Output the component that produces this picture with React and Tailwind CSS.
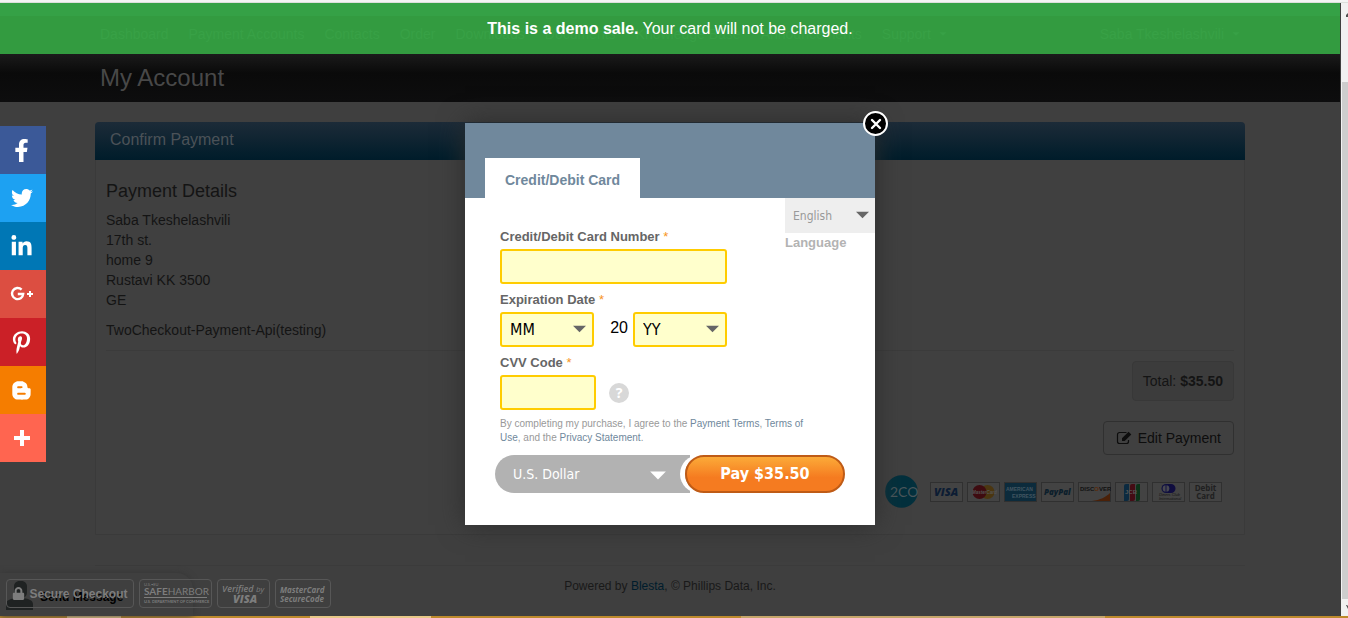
import React from "react";
import {
  FaFacebookF,
  FaTwitter,
  FaLinkedinIn,
  FaPinterestP,
  FaBloggerB,
  FaLock,
} from "react-icons/fa";

const navItems = [
  "Dashboard",
  "Payment Accounts",
  "Contacts",
  "Order",
  "Downloads",
  "Documents",
  "Knowledge Base",
  "Announcements",
];

const GooglePlus = () => (
  <svg viewBox="0 0 24 16" className="w-6 h-4" fill="none" stroke="white">
    <path d="M11.6 3.6A5.6 5.6 0 1 0 13.2 8H7.8" strokeWidth="2.4" />
    <path d="M20 5v6M17 8h6" strokeWidth="2" />
  </svg>
);

const Plus = () => (
  <svg viewBox="0 0 16 16" className="w-4 h-4" fill="white">
    <path d="M6 0h4v6h6v4h-6v6H6v-6H0V6h6z" />
  </svg>
);

const PencilSquare = () => (
  <svg viewBox="0 0 16 14" className="w-4 h-[14px]" fill="none" stroke="currentColor">
    <path d="M10.5 1.5h-7a2 2 0 0 0-2 2v7a2 2 0 0 0 2 2h7a2 2 0 0 0 2-2V9" strokeWidth="1.2" />
    <path d="M6 10V7.300L12.600 0.700L15.300 3.400L8.700 10z" fill="currentColor" stroke="none" />
  </svg>
);

const Caret = ({ className }) => (
  <svg viewBox="0 0 14 8" className={className} fill="currentColor">
    <path d="M0 0.5h14L7 7.5z" />
  </svg>
);

const shareLinks = [
  { name: "Facebook", color: "bg-[#3b5998]", icon: <FaFacebookF size={23} /> },
  { name: "Twitter", color: "bg-[#1da1f2]", icon: <FaTwitter size={22} /> },
  { name: "LinkedIn", color: "bg-[#0077b5]", icon: <FaLinkedinIn size={23} /> },
  { name: "Google+", color: "bg-[#dc4e41]", icon: <GooglePlus /> },
  { name: "Pinterest", color: "bg-[#cb2027]", icon: <FaPinterestP size={23} /> },
  { name: "Blogger", color: "bg-[#f57d00]", icon: <FaBloggerB size={21} /> },
  { name: "More", color: "bg-[#ff6550]", icon: <Plus /> },
];

const TopNav = () => (
  <nav className="relative h-[51px] bg-[#339b40] border-t-[13px] border-[#35a146]">
    <div className="max-w-[1150px] mx-auto px-[5px] flex justify-between pt-2 text-sm text-[#38a146]">
      <div className="flex gap-5">
        {navItems.map((item) => (
          <a key={item} href="#">
            {item}
          </a>
        ))}
        <a href="#" className="flex items-center gap-2">
          Support <Caret className="w-2 h-1" />
        </a>
      </div>
      <a href="#" className="flex items-center gap-2">
        Saba Tkeshelashvili <Caret className="w-2 h-1" />
      </a>
    </div>
    {/* Demo notice over the nav */}
    <p className="absolute inset-x-0 bottom-0 h-[51px] flex items-center justify-center gap-1 text-white">
      <strong>This is a demo sale.</strong> Your card will not be charged.
    </p>
  </nav>
);

const CardBadge = ({ label, children }) => (
  <svg viewBox="0 0 33 20" className="w-[33px] h-5" role="img" aria-label={label}>
    <rect x="0.5" y="0.5" width="32" height="19" fill="#434343" stroke="#303030" />
    {children}
  </svg>
);

const PaymentLogos = () => (
  <div className="flex items-center gap-1">
    <svg viewBox="0 0 33 33" className="w-[33px] h-[33px] mr-2" role="img" aria-label="2CO">
      <circle cx="16.5" cy="16.5" r="16.3" fill="#03303d" />
      <text x="5" y="22" fontSize="14" fill="#4a565b" fontFamily="Lato, sans-serif">
        2CO
      </text>
    </svg>
    <CardBadge label="Visa">
      <text x="4" y="14" fontSize="11" fontWeight="900" fontStyle="italic" fill="#0c1c33" fontFamily="Open Sans, sans-serif">
        VISA
      </text>
    </CardBadge>
    <CardBadge label="MasterCard">
      <circle cx="20.5" cy="10" r="7" fill="#4b3610" />
      <circle cx="12.5" cy="10" r="7" fill="#3e0b10" />
      <text x="5" y="12" fontSize="4.5" fontWeight="bold" fontStyle="italic" fill="#555" fontFamily="Liberation Sans, sans-serif">
        MasterCard
      </text>
    </CardBadge>
    <CardBadge label="American Express">
      <rect x="1" y="1" width="31" height="18" fill="#0c2b3c" />
      <text x="2" y="9" fontSize="5" fontWeight="bold" fill="#435661" fontFamily="Liberation Sans, sans-serif">
        AMERICAN
      </text>
      <text x="8" y="16" fontSize="5" fontWeight="bold" fill="#435661" fontFamily="Liberation Sans, sans-serif">
        EXPRESS
      </text>
    </CardBadge>
    <CardBadge label="PayPal">
      <text x="3" y="13" fontSize="8" fontWeight="900" fontStyle="italic" fill="#0c1e2b" fontFamily="Open Sans, sans-serif">
        PayPal
      </text>
    </CardBadge>
    <CardBadge label="Discover">
      <path d="M32 11v8H14c8-1 14-4 18-8z" fill="#4b2108" />
      <text x="2" y="9" fontSize="6" fontWeight="bold" fill="#111" fontFamily="Liberation Sans, sans-serif">
        DISC
        <tspan fill="#5a2a0b">O</tspan>
        VER
      </text>
    </CardBadge>
    <CardBadge label="JCB">
      <path d="M11 2h3v15a2 2 0 0 1-2 2H9V4a2 2 0 0 1 2-2z" fill="#0b2a40" />
      <path d="M17 2h3v15a2 2 0 0 1-2 2h-3V4a2 2 0 0 1 2-2z" fill="#450c14" />
      <path d="M23 2h2v15a2 2 0 0 1-2 2h-2V4a2 2 0 0 1 2-2z" fill="#0b3318" />
      <text x="10" y="12" fontSize="6" fontWeight="bold" fill="#555" fontFamily="Liberation Sans, sans-serif">
        JCB
      </text>
    </CardBadge>
    <CardBadge label="Diners Club">
      <path d="M14 2h5a4.5 4.500 0 0 1 0 9h-5z" fill="#100d3f" />
      <circle cx="14" cy="6.5" r="4.5" fill="#101040" />
      <circle cx="14" cy="6.5" r="3.3" fill="#484850" />
      <path d="M14 3v7" stroke="#101040" />
      <text x="7" y="14" fontSize="4" fontStyle="italic" fill="#151515" fontFamily="Liberation Sans, sans-serif">
        Diners Club
      </text>
      <text x="7" y="18" fontSize="4" fontStyle="italic" fill="#151515" fontFamily="Liberation Sans, sans-serif">
        International
      </text>
    </CardBadge>
    <CardBadge label="Debit Card">
      <text x="16.5" y="9" fontSize="8" textAnchor="middle" fontWeight="bold" fill="#202020" fontFamily="Open Sans, sans-serif">
        Debit
      </text>
      <text x="16.5" y="17" fontSize="8" textAnchor="middle" fontWeight="bold" fill="#202020" fontFamily="Open Sans, sans-serif">
        Card
      </text>
    </CardBadge>
  </div>
);

const ConfirmPayment = () => (
  <section className="rounded-t border border-[#3a3a3a] bg-[#404040]">
    <h2 className="h-[38px] -mx-px -mt-px rounded-t px-[15px] text-base leading-9 text-[#4b5258] bg-gradient-to-b from-[#1c2b38] to-[#001c2a]">
      Confirm Payment
    </h2>
    <div className="px-[10px] pt-[21px] pb-[26px]">
      <h3 className="text-lg leading-5 text-[#141414]">Payment Details</h3>
      <address className="pt-[9px] not-italic text-sm text-[#141414]">
        Saba Tkeshelashvili
        <br />
        17th st.
        <br />
        home 9
        <br />
        Rustavi KK 3500
        <br />
        GE
      </address>
      <p className="pt-[10px] text-sm text-[#141414]">TwoCheckout-Payment-Api(testing)</p>
      <hr className="mt-[10px] border-[#3b3b3b]" />
      <div className="flex flex-col items-end">
        <p className="mt-[10px] h-10 px-[10px] flex items-center gap-1 rounded border border-[#383838] bg-[#3c3c3c] text-sm text-[#141414]">
          Total: <strong>$35.50</strong>
        </p>
        <button className="my-5 h-[34px] px-3 flex items-center gap-[6px] rounded border border-[#303030] text-sm text-[#0d0d0d]">
          <PencilSquare /> Edit Payment
        </button>
        <div className="mr-3">
          <PaymentLogos />
        </div>
      </div>
    </div>
  </section>
);

const ShareBar = () => (
  <div className="absolute left-0 top-[123px] w-[46px]">
    {shareLinks.map((link) => (
      <a
        key={link.name}
        href="#"
        aria-label={link.name}
        className={`h-12 pr-[3px] flex items-center justify-center text-white ${link.color}`}
      >
        {link.icon}
      </a>
    ))}
  </div>
);

const TrustSeals = () => (
  <div className="absolute left-0 bottom-0 pl-[6px] pb-2 pt-[6px] w-[193px] rounded-tr-2xl shadow-[0_0_6px_#363636]">
    {/* Chat tab behind the seals */}
    <div className="absolute left-[6px] top-2 text-[#1f2222]">
      <svg viewBox="0 0 27 29" className="w-[27px] h-[29px]" fill="currentColor">
        <path d="M8 5c0-7 13-7 13 0v6c0 9-13 9-13 0zM0 29v-6c0-4 5-5 9-6h9c4 1 9 2 9 6v6z" />
      </svg>
    </div>
    <span className="absolute left-10 top-4 text-xs leading-4 font-bold text-black">Send Message</span>
    <div className="relative flex w-max gap-[5px] text-[#7d7d7d]">
      <div className="h-[29px] w-32 flex items-center justify-center gap-1 rounded-sm border border-[#575757] text-xs font-bold">
        <FaLock size={13} /> Secure Checkout
      </div>
      <div className="h-[29px] w-[73px] rounded-sm border border-[#575757]">
        <svg viewBox="0 0 71 27" className="w-full h-full" fill="currentColor" fontFamily="Lato, sans-serif">
          <text x="4" y="6" fontSize="4">
            U.S.•EU
          </text>
          <text x="4" y="15" fontSize="10">
            <tspan fontWeight="bold">SAFE</tspan>HARBOR
          </text>
          <path d="M4 17h63v1H4z" />
          <text x="4" y="23" fontSize="4" fontWeight="bold">
            U.S. DEPARTMENT OF COMMERCE
          </text>
        </svg>
      </div>
      <div className="h-[29px] w-[53px] rounded-sm border border-[#575757]">
        <svg viewBox="0 0 51 27" className="w-full h-full" fill="currentColor" fontFamily="Open Sans, sans-serif" fontStyle="italic">
          <text x="4" y="12" fontSize="9" fontWeight="600">
            Verified{" "}
            <tspan fontSize="8" fontWeight="400">
              by
            </tspan>
          </text>
          <text x="15" y="23" fontSize="11" fontWeight="800">
            VISA
          </text>
        </svg>
      </div>
      <div className="h-[29px] w-14 rounded-sm border border-[#575757]">
        <svg
          viewBox="0 0 54 27"
          className="w-full h-full"
          fill="currentColor"
          fontFamily="Open Sans, sans-serif"
          fontStyle="italic"
          fontWeight="700"
        >
          <text x="4" y="13" fontSize="8">
            MasterCard
          </text>
          <text x="4" y="22" fontSize="8">
            SecureCode
          </text>
        </svg>
      </div>
    </div>
  </div>
);

const Label = ({ htmlFor, children }) => (
  <label htmlFor={htmlFor} className="block text-[13px] leading-5 font-bold text-[#666]">
    {children} <span className="font-normal text-[#f7941d]">*</span>
  </label>
);

const YellowSelect = ({ id, label, value }) => (
  <div className="relative">
    <select
      id={id}
      aria-label={label}
      className="block appearance-none w-[94px] h-[35px] px-2 rounded-[3px] border-2 border-[#fc0] bg-[#ffc] font-['DejaVu_Sans_Condensed','Noto_Sans',sans-serif] text-base text-black"
    >
      <option>{value}</option>
    </select>
    <Caret className="absolute right-2 top-[13px] w-[13px] h-2 text-[#666] pointer-events-none" />
  </div>
);

const PaymentDialog = () => (
  <div role="dialog" aria-label="Payment" className="relative w-[410px] bg-white shadow-[0_0_25px_#2c2c2c]">
    <button
      aria-label="Close"
      className="absolute -right-[13px] -top-3 w-[25px] h-[25px] rounded-full border-2 border-white bg-black flex items-center justify-center"
    >
      <svg viewBox="0 0 12 12" className="w-3 h-3" stroke="white" strokeWidth="2.4" strokeLinecap="round">
        <path d="M2 2l8 8M10 2l-8 8" />
      </svg>
    </button>
    <div className="h-[75px] px-5 flex items-end bg-[#70889c]">
      <button className="h-10 px-5 pt-1 bg-white text-sm font-bold text-[#70889c]">
        Credit/Debit Card
      </button>
    </div>
    {/* Language picker */}
    <div className="absolute right-0 top-[75px] w-[90px]">
      <div className="relative">
        <select
          id="language"
          className="block appearance-none w-full h-[35px] px-2 bg-[#eee] font-['DejaVu_Sans_Condensed','Noto_Sans',sans-serif] text-xs text-[#999]"
        >
          <option>English</option>
        </select>
        <Caret className="absolute right-[6px] top-[13px] w-[13px] h-2 text-[#666] pointer-events-none" />
      </div>
      <label htmlFor="language" className="block text-[13px] leading-5 font-bold text-[#b3b3b3]">
        Language
      </label>
    </div>
    <form className="px-[30px] pt-[29px] pb-8">
      <div className="px-[5px]">
        <Label htmlFor="card-number">Credit/Debit Card Number</Label>
        <input
          id="card-number"
          className="block mt-0.5 mb-[6px] w-[227px] h-[35px] px-2 rounded-[3px] border-2 border-[#fc0] bg-[#ffc]"
        />
        <Label htmlFor="month">Expiration Date</Label>
        <div className="mt-0.5 mb-[6px] w-[227px] flex justify-between">
          <YellowSelect id="month" label="Month" value="MM" />
          <div className="flex gap-[5px]">
            <span className="leading-8 text-base text-black">20</span>
            <YellowSelect id="year" label="Year" value="YY" />
          </div>
        </div>
        <Label htmlFor="cvv">CVV Code</Label>
        <div className="mt-0.5 flex items-center gap-[13px]">
          <input
            id="cvv"
            className="block w-24 h-[35px] px-2 rounded-[3px] border-2 border-[#fc0] bg-[#ffc]"
          />
          <button
            type="button"
            className="w-5 h-5 rounded-full bg-[#d8d8d8] font-['Noto_Sans',sans-serif] text-sm leading-5 font-bold text-white"
          >
            ?
          </button>
        </div>
        <p className="mt-[7px] text-[10px] leading-[14px] text-[#999]">
          By completing my purchase, I agree to the{" "}
          <a href="#" className="text-[#70889c]">
            Payment Terms
          </a>
          ,{" "}
          <a href="#" className="text-[#70889c]">
            Terms of
            <br />
            Use
          </a>
          , and the{" "}
          <a href="#" className="text-[#70889c]">
            Privacy Statement
          </a>
          .
        </p>
      </div>
      <div className="mt-[10px] flex">
        <div className="relative flex-1">
          <select
            aria-label="Currency"
            className="block appearance-none w-full h-[38px] pl-[18px] rounded-l-full bg-[#b2b2b2] font-['DejaVu_Sans_Condensed','Noto_Sans',sans-serif] text-sm text-white"
          >
            <option>U.S. Dollar</option>
          </select>
          <Caret className="absolute right-6 top-4 w-4 h-[9px] text-white pointer-events-none" />
        </div>
        <button
          type="button"
          className="relative -ml-[5px] w-40 h-[38px] rounded-full border-2 border-[#bf5b16] bg-gradient-to-b from-[#fbaa38] to-[#f57b20] to-60% shadow-[-5px_0_0_white] font-['DejaVu_Sans_Condensed','Noto_Sans',sans-serif] text-base font-bold text-white"
        >
          Pay $35.50
        </button>
      </div>
    </form>
  </div>
);

const Scrollbar = () => (
  <div className="w-2 border-l border-[#3f3f3f] bg-[#f1f1f1] text-[#505050]">
    <div className="h-full pl-px flex flex-col">
      <svg viewBox="0 0 6 79" className="h-[79px]" fill="currentColor">
        <path d="M4 12l2-2v4h-2z" />
      </svg>
      <div className="flex-1 bg-[#cdcdcd]" />
      <svg viewBox="0 0 6 17" className="h-[17px]" fill="currentColor">
        <path d="M4 6h1l1 1v3z" />
      </svg>
    </div>
  </div>
);

const App = () => {
  return (
    <div className="min-h-screen flex flex-col bg-[#3f3f3f] font-['Liberation_Sans',Arial,sans-serif]">
      <div className="h-[3px] bg-[#f4f4f4] border-b border-[#dcdfdc]" />
      <div className="flex-1 flex">
        <div className="relative flex-1">
          <TopNav />
          <header className="h-12 bg-gradient-to-b from-[#1b1b1b] via-[#0a0a0a] via-40% to-[#0d0d0e]">
            <h1 className="max-w-[1150px] mx-auto px-[5px] text-2xl leading-[48px] text-[#484848]">
              My Account
            </h1>
          </header>
          <main className="max-w-[1150px] mx-auto pt-5">
            <ConfirmPayment />
            <footer className="mt-[30px] pt-1 border-t border-[#3b3b3b] text-center text-xs leading-8 text-[#191919]">
              Powered by{" "}
              <a href="#" className="text-[#001c2c]">
                Blesta
              </a>
              , © Phillips Data, Inc.
            </footer>
          </main>
          <TrustSeals />
          <ShareBar />
          {/* Checkout dialog */}
          <div className="absolute inset-x-0 top-[120px] flex justify-center">
            <PaymentDialog />
          </div>
        </div>
        <Scrollbar />
      </div>
      <div className="h-0.5 flex bg-[#bd8a2c]">
        <div className="w-[5%]" />
        <div className="w-[4%] bg-[#e8c888]" />
        <div className="w-[14%]" />
        <div className="w-[9%] bg-[#e8c888]" />
        <div className="w-[23%]" />
        <div className="w-[27%] bg-[#c6a66a]" />
      </div>
    </div>
  );
};

export default App;
